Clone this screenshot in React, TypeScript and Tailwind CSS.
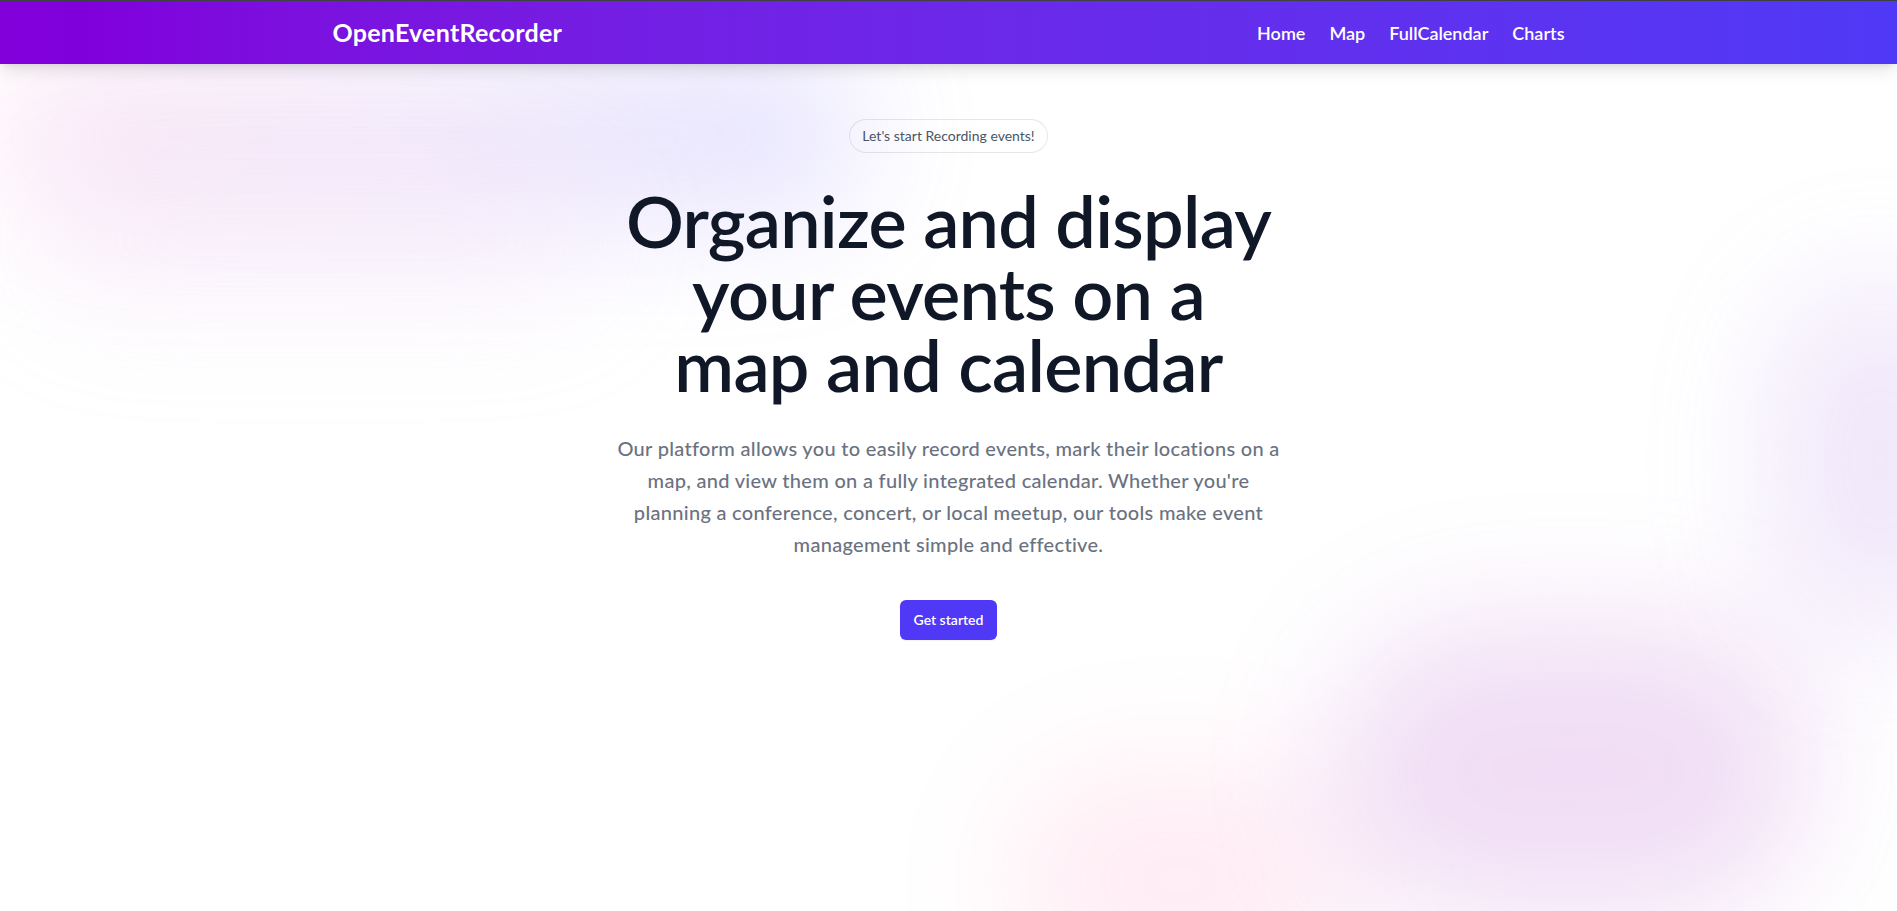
import React from "react";

const links = ["Home", "Map", "FullCalendar", "Charts"];

function Navbar() {
  return (
    <header className="relative z-10 h-16 border-t border-[#3f3f46] bg-linear-to-r from-purple-700 to-indigo-600 shadow-lg">
      <nav className="mx-auto flex h-full max-w-7xl items-center justify-between px-6">
        <a href="#" className="text-[25px] font-bold tracking-[0.01em] text-white">
          OpenEventRecorder
        </a>
        <div className="flex items-center gap-6">
          {links.map((l) => (
            <a key={l} href="#" className="text-lg font-semibold text-white">
              {l}
            </a>
          ))}
        </div>
      </nav>
    </header>
  );
}

function Blobs() {
  return (
    <div aria-hidden="true" className="pointer-events-none absolute inset-0 -z-10 overflow-hidden">
      {/* top left glow */}
      <div className="absolute left-0 top-[50px] h-[170px] w-[860px] rounded-full bg-linear-to-r from-[#f0a0d8] via-[#c8a8f0] to-[#9089fc] opacity-25 blur-3xl" />
      <div className="absolute left-[40px] top-[180px] h-[120px] w-[560px] rounded-full bg-[#e8c8f0] opacity-20 blur-3xl" />
      {/* bottom right glow */}
      <div className="absolute left-[1010px] top-[770px] h-[220px] w-[340px] rounded-full bg-[#ff80b5] opacity-15 blur-3xl" />
      <div className="absolute left-[1330px] top-[620px] h-[300px] w-[480px] rounded-full bg-[#c77dd9] opacity-25 blur-3xl" />
      <div className="absolute left-[1770px] top-[280px] h-[360px] w-[220px] rounded-full bg-[#b98ae8] opacity-20 blur-3xl" />
    </div>
  );
}

export default function App() {
  return (
    <div className="relative isolate h-screen overflow-hidden bg-white font-['Lato',sans-serif]">
      <Blobs />
      <Navbar />
      <main className="px-6 pt-14 lg:px-8">
        <div className="mx-auto max-w-3xl">
          <div className="mb-8 flex justify-center">
            <div className="rounded-full px-3 py-1 text-sm/6 text-gray-600 ring-1 ring-gray-900/10">
              Let's start Recording events!
            </div>
          </div>
          <div className="text-center">
            <h1 className="text-7xl font-semibold tracking-[-0.01em] text-gray-900">
              Organize and display
              <br />
              your events on a
              <br />
              map and calendar
            </h1>
            <p className="mt-8 text-xl/8 font-medium tracking-[0.015em] text-gray-500">
              Our platform allows you to easily record events, mark their locations on a
              <br />
              map, and view them on a fully integrated calendar. Whether you're
              <br />
              planning a conference, concert, or local meetup, our tools make event
              <br />
              management simple and effective.
            </p>
            <div className="mt-10 flex items-center justify-center">
              <a
                href="#"
                className="rounded-md bg-indigo-600 px-3.5 py-2.5 text-sm font-semibold text-white shadow-xs"
              >
                Get started
              </a>
            </div>
          </div>
        </div>
      </main>
    </div>
  );
}
